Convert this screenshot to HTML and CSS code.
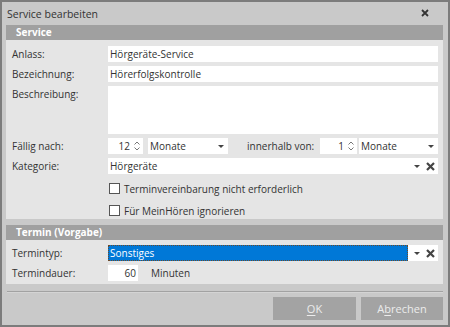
FILE: index.html
```html
<!DOCTYPE html>
<html lang="de">
<head>
<meta charset="utf-8">
<title>Service bearbeiten</title>
<link rel="stylesheet" href="styles.css">
</head>
<body>
<div class="window">
  <div class="titlebar">
    <span class="title">Service bearbeiten</span>
    <svg class="close" width="8" height="8" viewBox="0 0 8 8"><path d="M1 1L7 7M7 1L1 7" stroke="#333" stroke-width="1.8"/></svg>
  </div>
  <div class="content">
    <div class="section">
      <div class="sec-head">Service</div>
      <div class="sec-body sec-service">
        <div class="row"><div class="label">Anlass:</div><div class="input grow">Hörgeräte-Service</div></div>
        <div class="row"><div class="label">Bezeichnung:</div><div class="input grow">Hörerfolgskontrolle</div></div>
        <div class="row row-area"><div class="label">Beschreibung:</div><div class="input grow area"></div></div>
        <div class="row">
          <div class="label">Fällig nach:</div>
          <div class="input spin spin1"><span class="num">12</span>
            <svg class="arrows" width="6" height="10" viewBox="0 0 6 10"><path d="M0.5 3.5L3 1L5.5 3.5M0.5 6.5L3 9L5.5 6.5" fill="none" stroke="#777" stroke-width="1"/></svg>
          </div>
          <div class="input select sel1"><span>Monate</span><span class="caret"></span></div>
          <div class="label2">innerhalb von:</div>
          <div class="input spin spin2"><span class="num">1</span>
            <svg class="arrows" width="6" height="10" viewBox="0 0 6 10"><path d="M0.5 3.5L3 1L5.5 3.5M0.5 6.5L3 9L5.5 6.5" fill="none" stroke="#777" stroke-width="1"/></svg>
          </div>
          <div class="input select sel2 grow"><span>Monate</span><span class="caret"></span></div>
        </div>
        <div class="row">
          <div class="label">Kategorie:</div>
          <div class="input combo grow"><span class="ctext">Hörgeräte</span><span class="caret"></span>
            <svg class="clear" width="9" height="9" viewBox="0 0 9 9"><path d="M1 1L8 8M8 1L1 8" stroke="#444" stroke-width="2.2"/></svg>
          </div>
        </div>
        <div class="check first"><span class="box"></span><span>Terminvereinbarung nicht erforderlich</span></div>
        <div class="check second"><span class="box"></span><span>Für MeinHören ignorieren</span></div>
      </div>
    </div>
    <div class="section sec2">
      <div class="sec-head">Termin (Vorgabe)</div>
      <div class="sec-body sec-termin">
        <div class="row">
          <div class="label">Termintyp:</div>
          <div class="input combo grow"><span class="ctext selected">Sonstiges</span><span class="caret"></span>
            <svg class="clear" width="9" height="9" viewBox="0 0 9 9"><path d="M1 1L8 8M8 1L1 8" stroke="#444" stroke-width="2.2"/></svg>
          </div>
        </div>
        <div class="row">
          <div class="label">Termindauer:</div>
          <div class="input dauer"><span class="num">60</span></div>
          <div class="unit">Minuten</div>
        </div>
      </div>
    </div>
    <div class="separator"></div>
    <div class="buttons">
      <div class="btn btn-ok"><u>O</u>K</div>
      <div class="btn btn-cancel">A<u>b</u>rechen</div>
    </div>
  </div>
</div>
</body>
</html>
```

FILE: styles.css
```css
* { box-sizing: border-box; }
html, body { margin: 0; padding: 0; }
body {
  font-family: "Open Sans", "Noto Sans", sans-serif;
  font-size: 10px;
  color: #333;
  background: #c8c8c8;
}
.window {
  width: 450px;
  height: 327px;
  border: 2px solid #7c7c7c;
  background: #c9c9c9;
  display: flex;
  flex-direction: column;
}
.titlebar {
  height: 23px;
  display: flex;
  align-items: center;
  justify-content: space-between;
  padding: 0 19px 0 5px;
}
.title { font-size: 10.5px; color: #333; }
.close { display: block; margin-top: -1px; }
.content {
  padding: 0 5px 0 4px;
  display: flex;
  flex-direction: column;
}
.sec-head {
  height: 15px;
  background: #a0a0a0;
  color: #fff;
  font-weight: 700;
  font-size: 10px;
  line-height: 15px;
  padding-left: 10px;
}
.sec-body {
  background: #e5e5e5;
  padding: 6px 5px 3px 6px;
  display: flex;
  flex-direction: column;
}
.sec-service { gap: 4px; }
.sec-termin { gap: 4px; padding-top: 5px; padding-bottom: 3px; }
.sec2 { margin-top: 6px; }
.row {
  display: flex;
  align-items: center;
  height: 16px;
  white-space: nowrap;
}
.row-area { height: 48px; align-items: flex-start; }
.row-area .label { line-height: 16px; }
.label { width: 96px; flex: none; }
.input {
  background: #fff;
  height: 16px;
  line-height: 16px;
  padding: 0 2px;
  display: flex;
  align-items: center;
  white-space: nowrap;
}
.grow { flex: 1; }
.area { height: 48px; }
.spin { justify-content: flex-end; padding-right: 3px; }
.spin .num { margin-right: 4px; }
.spin1 { width: 35px; }
.spin2 { width: 37px; }
.sel1 { width: 80px; margin-left: 5px; }
.sel2 { margin-left: 2px; }
.select { justify-content: space-between; padding-right: 4px; }
.label2 { width: 73px; margin-left: 19px; flex: none; }
.caret {
  width: 0; height: 0;
  border-left: 3px solid transparent;
  border-right: 3px solid transparent;
  border-top: 3px solid #444;
  flex: none;
}
.combo { padding: 0; }
.combo .ctext { flex: 1; padding-left: 2px; height: 16px; }
.combo .caret { margin: 0 6px 0 6px; }
.combo .clear { margin-right: 3px; flex: none; }
.selected {
  background: #0078d7;
  color: #fff;
  outline: 1px dotted #6b4a2a;
  outline-offset: -1px;
}
.check {
  display: flex;
  align-items: center;
  padding-left: 97px;
  height: 11px;
  white-space: nowrap;
}
.check.first { margin-top: 5px; }
.check.second { margin-top: 7px; }
.box {
  width: 11px; height: 11px;
  border: 1px solid #555;
  background: #fff;
  margin-right: 4px;
  flex: none;
}
.dauer { width: 30px; justify-content: flex-end; padding-right: 2px; }
.unit { margin-left: 13px; }
.separator {
  margin-top: 7px;
  height: 2px;
  border-top: 1px solid #a2a2a2;
  border-bottom: 1px solid #d4d4d4;
  margin-left: 1px;
}
.buttons {
  display: flex;
  justify-content: flex-end;
  gap: 5px;
  margin-top: 4px;
}
.btn {
  height: 23px;
  background: #a3a3a3;
  color: #ececec;
  font-size: 11px;
  display: flex;
  align-items: center;
  justify-content: center;
}
.btn-ok { width: 83px; }
.btn-cancel { width: 82px; }
.btn u { text-decoration-thickness: 1px; text-underline-offset: 2px; }
```
